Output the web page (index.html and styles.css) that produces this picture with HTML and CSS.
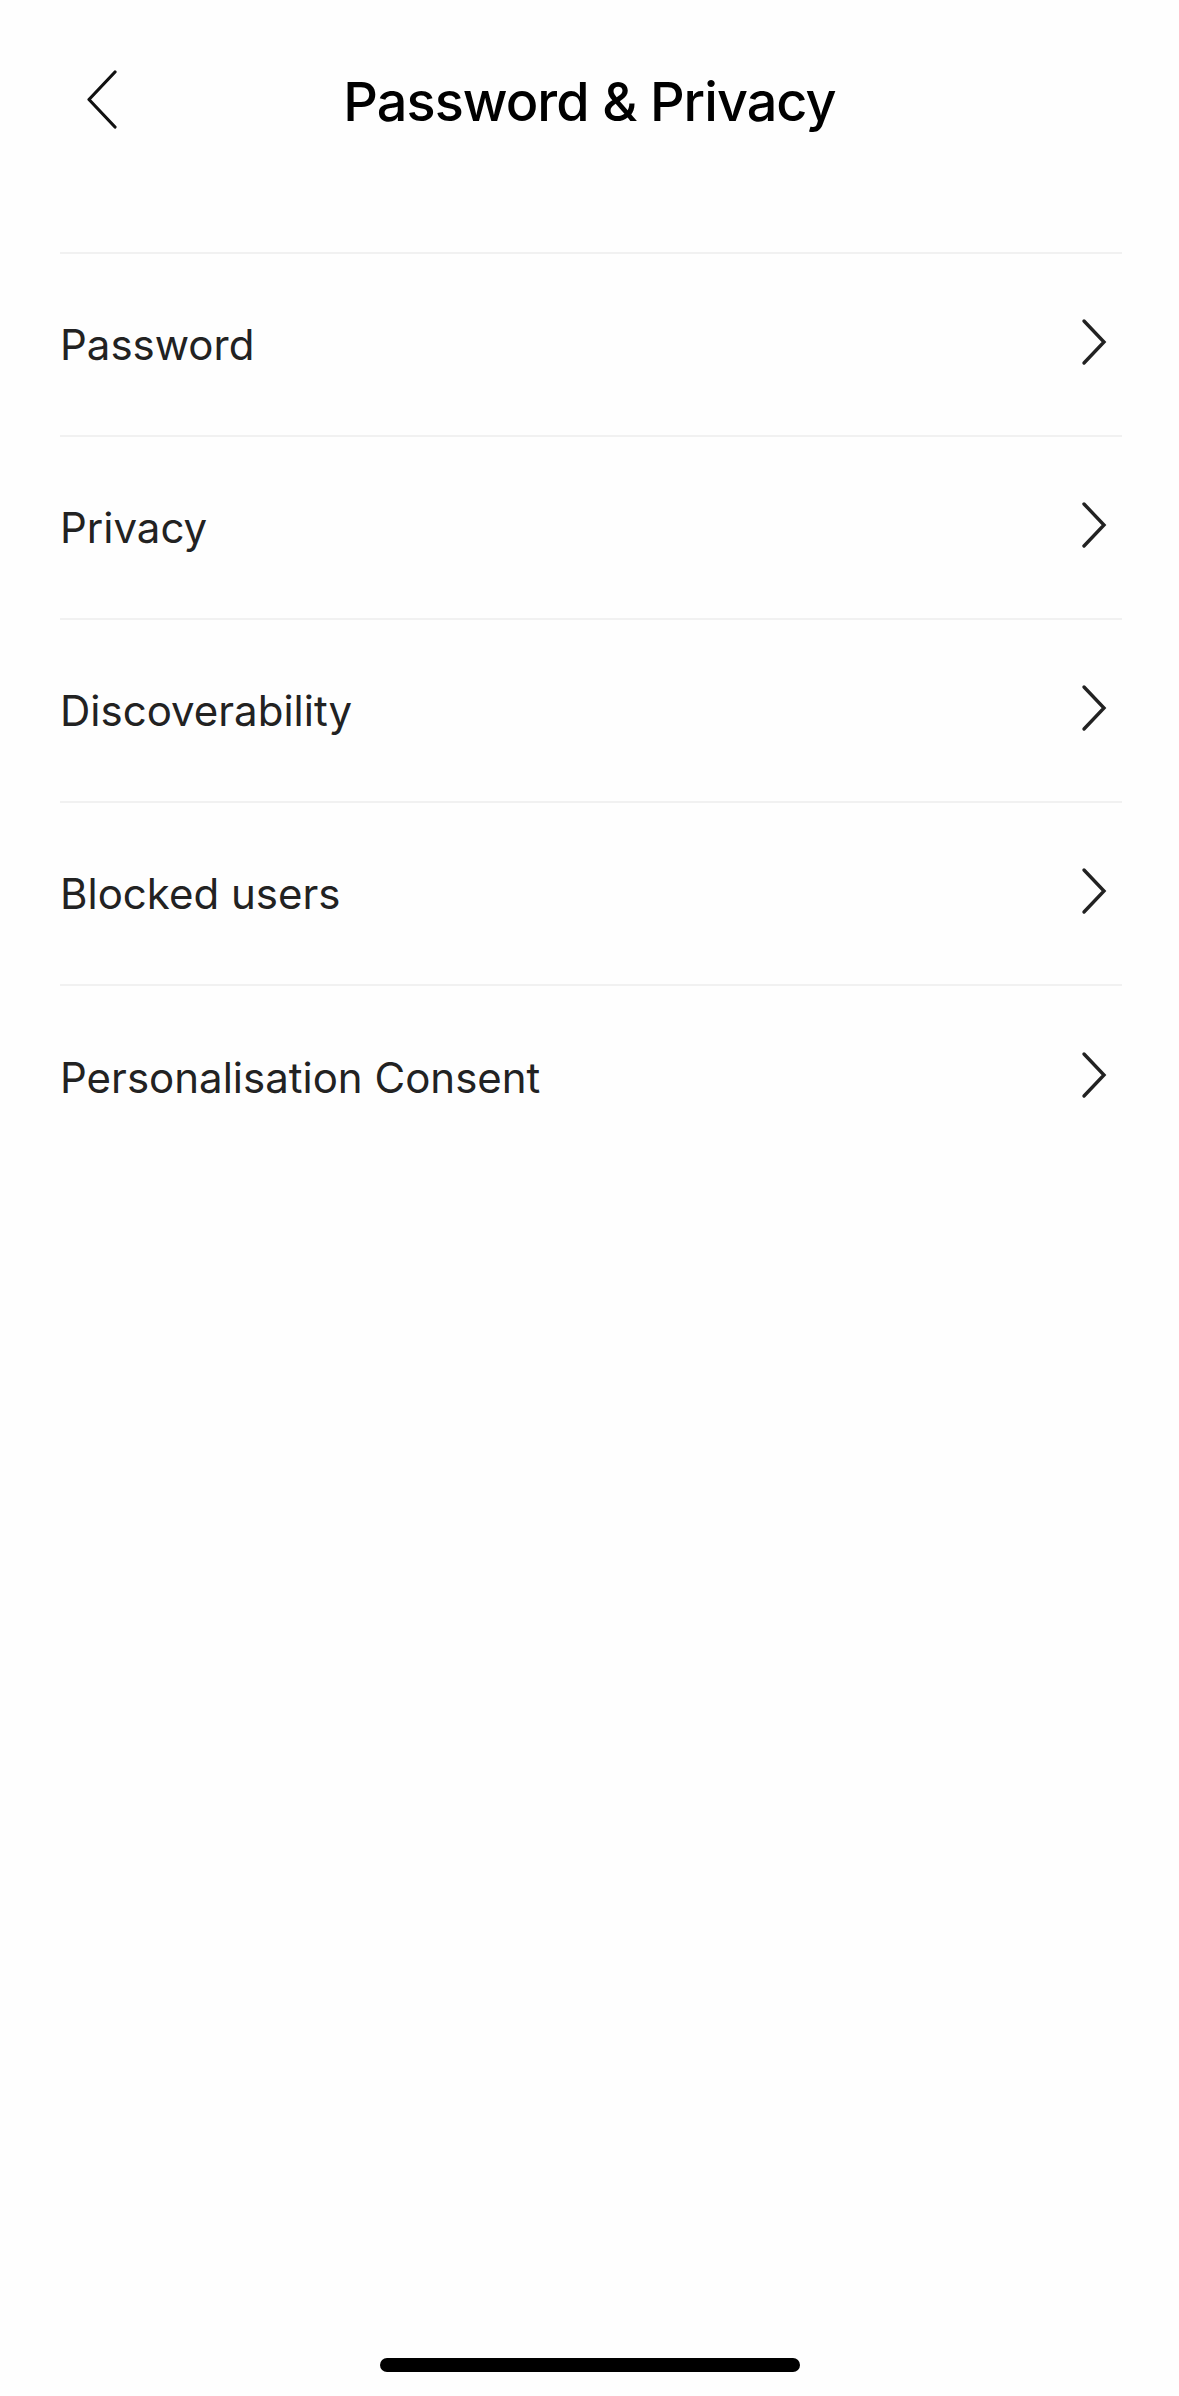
FILE: index.html
```html
<!DOCTYPE html>
<html lang="en">
<head>
<meta charset="utf-8">
<title>Password &amp; Privacy</title>
<link rel="stylesheet" href="styles.css">
</head>
<body>
<div class="screen">
  <header class="header">
    <button class="back" aria-label="Back">
      <svg width="34" height="60" viewBox="0 0 34 60"><path d="M30 2 L4 29.5 L30 57" fill="none" stroke="#111" stroke-width="3.2" stroke-linecap="round" stroke-linejoin="round"/></svg>
    </button>
    <h1 class="title">Password &amp; Privacy</h1>
  </header>
  <ul class="menu">
    <li class="item"><span class="label">Password</span><svg class="chev" width="28" height="48" viewBox="0 0 28 48"><path d="M4 3 L24 24 L4 45" fill="none" stroke="#222" stroke-width="3.4" stroke-linecap="round" stroke-linejoin="miter"/></svg></li>
    <li class="item"><span class="label">Privacy</span><svg class="chev" width="28" height="48" viewBox="0 0 28 48"><path d="M4 3 L24 24 L4 45" fill="none" stroke="#222" stroke-width="3.4" stroke-linecap="round" stroke-linejoin="miter"/></svg></li>
    <li class="item"><span class="label">Discoverability</span><svg class="chev" width="28" height="48" viewBox="0 0 28 48"><path d="M4 3 L24 24 L4 45" fill="none" stroke="#222" stroke-width="3.4" stroke-linecap="round" stroke-linejoin="miter"/></svg></li>
    <li class="item"><span class="label">Blocked users</span><svg class="chev" width="28" height="48" viewBox="0 0 28 48"><path d="M4 3 L24 24 L4 45" fill="none" stroke="#222" stroke-width="3.4" stroke-linecap="round" stroke-linejoin="miter"/></svg></li>
    <li class="item last"><span class="label">Personalisation Consent</span><svg class="chev" width="28" height="48" viewBox="0 0 28 48"><path d="M4 3 L24 24 L4 45" fill="none" stroke="#222" stroke-width="3.4" stroke-linecap="round" stroke-linejoin="miter"/></svg></li>
  </ul>
  <div class="spacer"></div>
  <div class="home-bar"></div>
</div>
</body>
</html>
```
FILE: styles.css
```css
* { box-sizing: border-box; }
html, body { margin: 0; padding: 0; background: #fefefe; }
body { font-family: Inter, "Noto Sans", "Liberation Sans", sans-serif; color: #222; }
.screen { width: 1179px; height: 2396px; display: flex; flex-direction: column; }
.header { position: relative; height: 202px; display: flex; align-items: center; justify-content: center; }
.back { position: absolute; left: 85px; top: 70px; width: 34px; height: 60px; padding: 0; border: 0; background: none; display: flex; }
.title { margin: 0; font-size: 54px; font-weight: 500; color: #000; letter-spacing: -0.95px; }
.menu { list-style: none; margin: 50px 57px 0 60px; padding: 0; border-top: 2px solid #f1f1f1; }
.item { height: 183px; border-bottom: 2px solid #f1f1f1; display: flex; align-items: center; justify-content: space-between; padding-right: 14px; }
.item.last { border-bottom: 0; }
.label { font-size: 42px; font-weight: 400; color: #222; letter-spacing: 0; }
.chev { display: block; margin-top: -6px; }
.spacer { flex: 1; }
.home-bar { width: 420px; height: 14px; border-radius: 7px; background: #000; align-self: center; margin-bottom: 24px; }
```
